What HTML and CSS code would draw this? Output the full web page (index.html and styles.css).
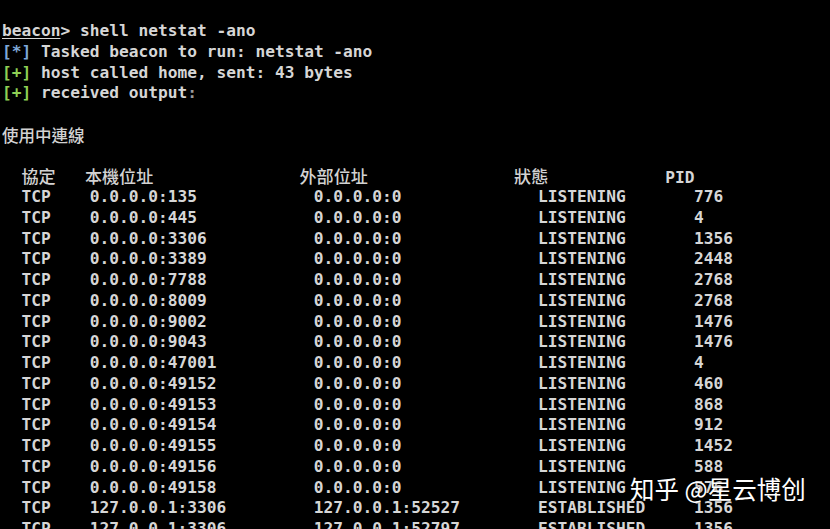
FILE: index.html
```html
<!DOCTYPE html>
<html lang="zh-Hant">
<head>
<meta charset="utf-8">
<title>beacon netstat</title>
<link rel="stylesheet" href="styles.css">
</head>
<body>
<main class="term">
  <div class="line"><span class="u">beacon</span>&gt; shell netstat -ano</div>
  <div class="line"><span class="info">[*]</span> Tasked beacon to run: netstat -ano</div>
  <div class="line"><span class="ok">[+]</span> host called home, sent: 43 bytes</div>
  <div class="line"><span class="ok">[+]</span> received output<span class="dim">:</span></div>
  <div class="line"> </div>
  <div class="line cjk">使用中連線</div>
  <div class="line"> </div>
  <div class="line hdr">  <span class="cjk hc">協定</span>   <span class="cjk hc">本機位址</span>               <span class="cjk hc">外部位址</span>               <span class="cjk hc">狀態</span>            PID</div>
  <div class="rows">
    <div class="row"><span class="p">TCP</span><span class="l">0.0.0.0:135</span><span class="f">0.0.0.0:0</span><span class="s">LISTENING</span><span>776</span></div>
    <div class="row"><span class="p">TCP</span><span class="l">0.0.0.0:445</span><span class="f">0.0.0.0:0</span><span class="s">LISTENING</span><span>4</span></div>
    <div class="row"><span class="p">TCP</span><span class="l">0.0.0.0:3306</span><span class="f">0.0.0.0:0</span><span class="s">LISTENING</span><span>1356</span></div>
    <div class="row"><span class="p">TCP</span><span class="l">0.0.0.0:3389</span><span class="f">0.0.0.0:0</span><span class="s">LISTENING</span><span>2448</span></div>
    <div class="row"><span class="p">TCP</span><span class="l">0.0.0.0:7788</span><span class="f">0.0.0.0:0</span><span class="s">LISTENING</span><span>2768</span></div>
    <div class="row"><span class="p">TCP</span><span class="l">0.0.0.0:8009</span><span class="f">0.0.0.0:0</span><span class="s">LISTENING</span><span>2768</span></div>
    <div class="row"><span class="p">TCP</span><span class="l">0.0.0.0:9002</span><span class="f">0.0.0.0:0</span><span class="s">LISTENING</span><span>1476</span></div>
    <div class="row"><span class="p">TCP</span><span class="l">0.0.0.0:9043</span><span class="f">0.0.0.0:0</span><span class="s">LISTENING</span><span>1476</span></div>
    <div class="row"><span class="p">TCP</span><span class="l">0.0.0.0:47001</span><span class="f">0.0.0.0:0</span><span class="s">LISTENING</span><span>4</span></div>
    <div class="row"><span class="p">TCP</span><span class="l">0.0.0.0:49152</span><span class="f">0.0.0.0:0</span><span class="s">LISTENING</span><span>460</span></div>
    <div class="row"><span class="p">TCP</span><span class="l">0.0.0.0:49153</span><span class="f">0.0.0.0:0</span><span class="s">LISTENING</span><span>868</span></div>
    <div class="row"><span class="p">TCP</span><span class="l">0.0.0.0:49154</span><span class="f">0.0.0.0:0</span><span class="s">LISTENING</span><span>912</span></div>
    <div class="row"><span class="p">TCP</span><span class="l">0.0.0.0:49155</span><span class="f">0.0.0.0:0</span><span class="s">LISTENING</span><span>1452</span></div>
    <div class="row"><span class="p">TCP</span><span class="l">0.0.0.0:49156</span><span class="f">0.0.0.0:0</span><span class="s">LISTENING</span><span>588</span></div>
    <div class="row"><span class="p">TCP</span><span class="l">0.0.0.0:49158</span><span class="f">0.0.0.0:0</span><span class="s">LISTENING</span><span>576</span></div>
    <div class="row"><span class="p">TCP</span><span class="l">127.0.0.1:3306</span><span class="f">127.0.0.1:52527</span><span class="s">ESTABLISHED</span><span>1356</span></div>
    <div class="row"><span class="p">TCP</span><span class="l">127.0.0.1:3306</span><span class="f">127.0.0.1:52797</span><span class="s">ESTABLISHED</span><span>1356</span></div>
  </div>
  <div class="mark">知乎 @星云博创</div>
</main>
</body>
</html>
```

FILE: styles.css
```css
html, body {
  margin: 0;
  padding: 0;
  background: #000;
  height: 100%;
  overflow: hidden;
}

.term {
  position: relative;
  padding: 21px 0 0 2px;
  font-family: "DejaVu Sans Mono", "Noto Sans CJK TC", monospace;
  font-weight: 700;
  font-size: 16.2px;
  line-height: 20.75px;
  color: #d6d6d6;
}

.line {
  white-space: pre;
  height: 20.75px;
}

.u {
  text-decoration: underline;
  text-underline-offset: 2px;
}

.info { color: #7fa8d8; }
.ok { color: #8fcf55; }
.dim { color: #9a9a9a; }

.cjk {
  font-family: "Noto Sans CJK TC", sans-serif;
  font-weight: 500;
  font-size: 16.5px;
  color: #d2d2d2;
}

.hc {
  font-size: 17.1px;
}

.hdr { white-space: pre; }

.rows {
  display: flex;
  flex-direction: column;
}

.row {
  display: flex;
  height: 20.75px;
  white-space: pre;
}

.row .p {
  width: 9ch;
  padding-left: 2ch;
  box-sizing: border-box;
}

.row .l,
.row .f {
  width: 23ch;
}

.row .s {
  width: 16ch;
}

.mark {
  position: absolute;
  left: 630px;
  top: 472px;
  font-family: "Noto Sans CJK SC", sans-serif;
  font-weight: 400;
  font-size: 24.5px;
  line-height: 34px;
  color: #fff;
  white-space: pre;
  text-shadow: 0 0 2px rgba(0,0,0,0.6);
}
```
